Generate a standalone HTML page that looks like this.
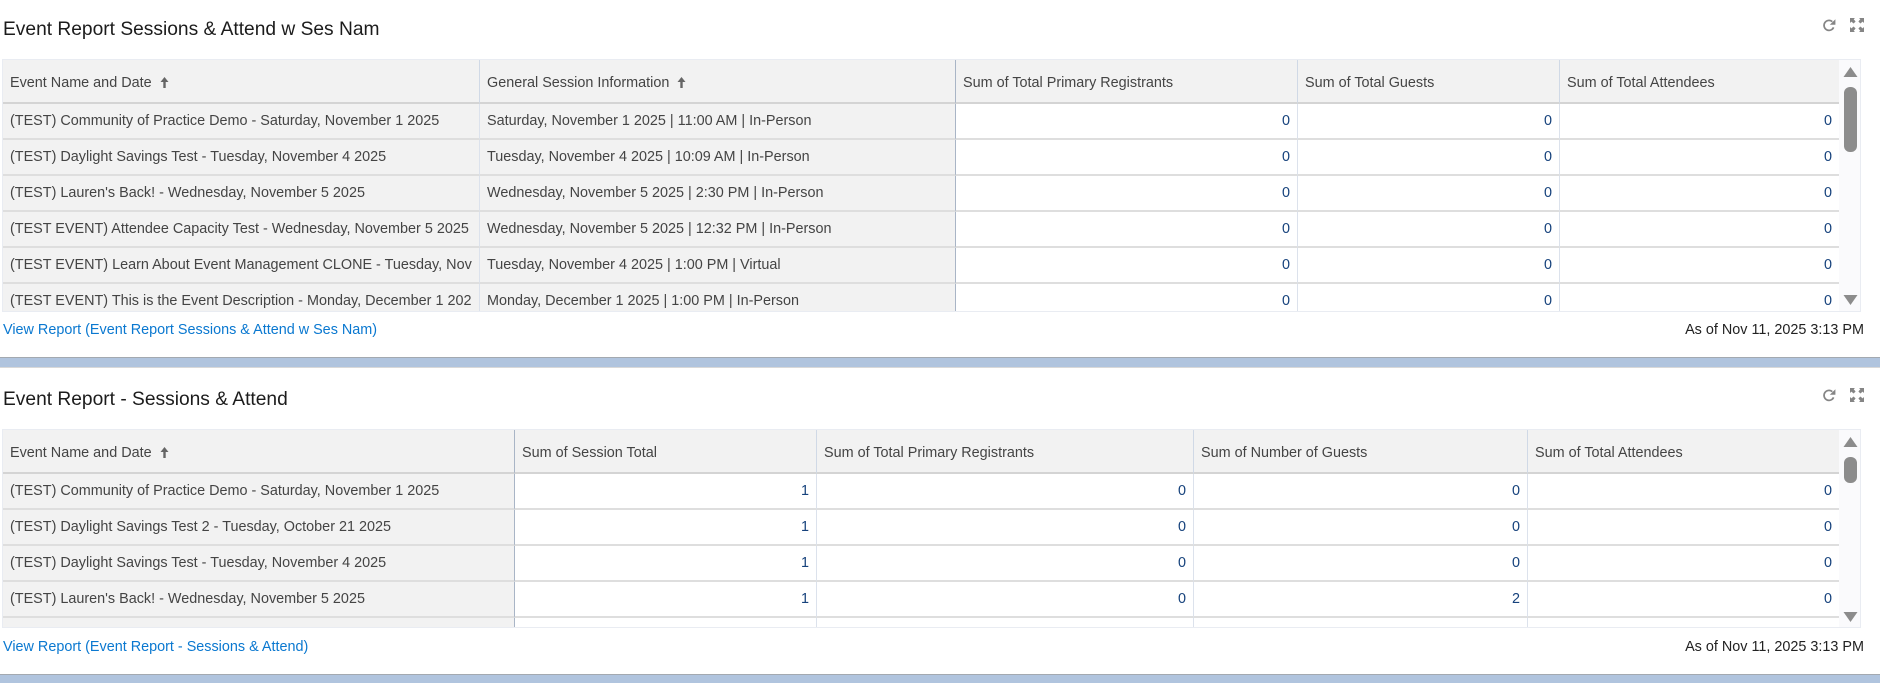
<!DOCTYPE html>
<html><head><meta charset="utf-8"><title>Dashboard</title>
<style>
html,body{margin:0;padding:0;width:1880px;height:683px;overflow:hidden;background:#fff;font-family:"Liberation Sans",Arial,sans-serif}
#root{position:absolute;left:0;top:0;width:1880px;height:683px;overflow:hidden;background:#fff;filter:blur(.35px)}
.abs{position:absolute}
.title{position:absolute;left:3px;font-size:19.2px;line-height:24px;color:#1c1c1c;white-space:nowrap}
.link{position:absolute;left:3px;font-size:14.4px;line-height:18px;color:#0a78d0;white-space:nowrap}
.asof{position:absolute;right:16px;font-size:14.4px;line-height:18px;color:#222;white-space:nowrap}
.band{position:absolute;left:0;width:1880px;background:#b0c4de}
.wrap{position:absolute;left:2px;width:1859px;background:#fff;border:1px solid #e9ecf2;box-sizing:border-box;overflow:hidden}
table{position:absolute;left:0;top:0;border-collapse:separate;border-spacing:0;table-layout:fixed;font-size:14.4px}
th,td{box-sizing:border-box;white-space:nowrap;overflow:hidden;padding:0 7px;text-align:left;font-weight:normal;color:#444}
th{height:44px;background:#f2f2f2;border-bottom:2px solid #d4d4d4;border-right:1px solid #d0d9e6;padding-top:3px}
td{height:36px;border-bottom:2px solid #dedede;border-right:1px solid #dce2ec;padding-bottom:1px}
td.g{background:#f2f2f2}
td.n{text-align:right;color:#16427c;padding-right:7px}
.dk{border-right:1px solid #a9b5c6!important}
th:last-child,td:last-child{border-right:none}
.sb{position:absolute;background:#fafafc}
svg{position:absolute;display:block}
.s{display:inline-block;width:9px;height:11px;position:relative;margin-left:8px;vertical-align:-1px}
.s svg{left:0;top:0}
.c{overflow:hidden;white-space:nowrap}
</style></head><body><div id="root">

<div class="title" style="top:18px">Event Report Sessions &amp; Attend w Ses Nam</div>

<svg style="left:1822px;top:18px" width="15" height="15" viewBox="0 0 15 15"><path d="M11.6 9.4A5 5 0 1 1 10.3 3.6" fill="none" stroke="#858585" stroke-width="1.7"/><path d="M13.4 1.2V6.8H7.8Z" fill="#858585"/></svg>
<svg style="left:1850px;top:18px" width="14" height="14" viewBox="0 0 14 14" fill="#858585"><path d="M0 0H5L3.7 1.3 5.6 3.5 3.6 5.5 1.4 3.6 0 5Z"/><path d="M14 0H9L10.3 1.3 8.4 3.5 10.4 5.5 12.6 3.6 14 5Z"/><path d="M0 14H5L3.7 12.7 5.6 10.5 3.6 8.5 1.4 10.4 0 9Z"/><path d="M14 14H9L10.3 12.7 8.4 10.5 10.4 8.5 12.6 10.4 14 9Z"/></svg>

<div class="wrap" style="top:59px;height:253px">
<table style="width:1836px">
<colgroup><col style="width:477px"><col style="width:476px"><col style="width:342px"><col style="width:262px"><col style="width:279px"></colgroup>
<tr><th>Event Name and Date<span class="s"><svg width="9" height="11" viewBox="0 0 9 11"><path d="M4.5 0 8.5 5H5.7V11H3.3V5H.5Z" fill="#666"/></svg></span></th><th class="dk">General Session Information<span class="s"><svg width="9" height="11" viewBox="0 0 9 11"><path d="M4.5 0 8.5 5H5.7V11H3.3V5H.5Z" fill="#666"/></svg></span></th><th>Sum of Total Primary Registrants</th><th>Sum of Total Guests</th><th>Sum of Total Attendees</th></tr>
<tr><td class="g">(TEST) Community of Practice Demo - Saturday, November 1 2025</td><td class="g dk">Saturday, November 1 2025 | 11:00 AM | In-Person</td><td class="n">0</td><td class="n">0</td><td class="n">0</td></tr>
<tr><td class="g">(TEST) Daylight Savings Test - Tuesday, November 4 2025</td><td class="g dk">Tuesday, November 4 2025 | 10:09 AM | In-Person</td><td class="n">0</td><td class="n">0</td><td class="n">0</td></tr>
<tr><td class="g">(TEST) Lauren's Back! - Wednesday, November 5 2025</td><td class="g dk">Wednesday, November 5 2025 | 2:30 PM | In-Person</td><td class="n">0</td><td class="n">0</td><td class="n">0</td></tr>
<tr><td class="g">(TEST EVENT) Attendee Capacity Test - Wednesday, November 5 2025</td><td class="g dk">Wednesday, November 5 2025 | 12:32 PM | In-Person</td><td class="n">0</td><td class="n">0</td><td class="n">0</td></tr>
<tr><td class="g"><div class="c">(TEST EVENT) Learn About Event Management CLONE - Tuesday, November 4 2025</div></td><td class="g dk">Tuesday, November 4 2025 | 1:00 PM | Virtual</td><td class="n">0</td><td class="n">0</td><td class="n">0</td></tr>
<tr><td class="g"><div class="c">(TEST EVENT) This is the Event Description - Monday, December 1 2025</div></td><td class="g dk">Monday, December 1 2025 | 1:00 PM | In-Person</td><td class="n">0</td><td class="n">0</td><td class="n">0</td></tr>
</table>
<div class="sb" style="left:1836px;top:0;width:22px;height:251px"></div>
<svg style="left:1840px;top:6px" width="15" height="12" viewBox="0 0 15 12"><path d="M7.5 1 14.5 11H.5Z" fill="#8c8c8c"/></svg>
<div class="abs" style="left:1841px;top:27px;width:13px;height:65px;border-radius:6px;background:#8c8c8c"></div>
<svg style="left:1840px;top:235px" width="15" height="11" viewBox="0 0 15 11"><path d="M.5 0H14.5L7.5 10Z" fill="#8c8c8c"/></svg>
</div>
<div class="link" style="top:321px">View Report (Event Report Sessions &amp; Attend w Ses Nam)</div>
<div class="asof" style="top:321px">As of Nov 11, 2025 3:13 PM</div>

<div class="band" style="top:357px;height:11px;border-top:1px solid #a3a9b0;border-bottom:1px solid #d8d8d8;box-sizing:border-box"></div>

<div class="title" style="top:388px">Event Report - Sessions &amp; Attend</div>

<svg style="left:1822px;top:388px" width="15" height="15" viewBox="0 0 15 15"><path d="M11.6 9.4A5 5 0 1 1 10.3 3.6" fill="none" stroke="#858585" stroke-width="1.7"/><path d="M13.4 1.2V6.8H7.8Z" fill="#858585"/></svg>
<svg style="left:1850px;top:388px" width="14" height="14" viewBox="0 0 14 14" fill="#858585"><path d="M0 0H5L3.7 1.3 5.6 3.5 3.6 5.5 1.4 3.6 0 5Z"/><path d="M14 0H9L10.3 1.3 8.4 3.5 10.4 5.5 12.6 3.6 14 5Z"/><path d="M0 14H5L3.7 12.7 5.6 10.5 3.6 8.5 1.4 10.4 0 9Z"/><path d="M14 14H9L10.3 12.7 8.4 10.5 10.4 8.5 12.6 10.4 14 9Z"/></svg>

<div class="wrap" style="top:429px;height:199px">
<table style="width:1836px">
<colgroup><col style="width:512px"><col style="width:302px"><col style="width:377px"><col style="width:334px"><col style="width:311px"></colgroup>
<tr><th class="dk">Event Name and Date<span class="s"><svg width="9" height="11" viewBox="0 0 9 11"><path d="M4.5 0 8.5 5H5.7V11H3.3V5H.5Z" fill="#666"/></svg></span></th><th>Sum of Session Total</th><th>Sum of Total Primary Registrants</th><th>Sum of Number of Guests</th><th>Sum of Total Attendees</th></tr>
<tr><td class="g dk">(TEST) Community of Practice Demo - Saturday, November 1 2025</td><td class="n">1</td><td class="n">0</td><td class="n">0</td><td class="n">0</td></tr>
<tr><td class="g dk">(TEST) Daylight Savings Test 2 - Tuesday, October 21 2025</td><td class="n">1</td><td class="n">0</td><td class="n">0</td><td class="n">0</td></tr>
<tr><td class="g dk">(TEST) Daylight Savings Test - Tuesday, November 4 2025</td><td class="n">1</td><td class="n">0</td><td class="n">0</td><td class="n">0</td></tr>
<tr><td class="g dk">(TEST) Lauren's Back! - Wednesday, November 5 2025</td><td class="n">1</td><td class="n">0</td><td class="n">2</td><td class="n">0</td></tr>
<tr><td class="g dk">&nbsp;</td><td class="n">&nbsp;</td><td class="n">&nbsp;</td><td class="n">&nbsp;</td><td class="n">&nbsp;</td></tr>
</table>
<div class="sb" style="left:1836px;top:0;width:22px;height:197px"></div>
<svg style="left:1840px;top:6px" width="15" height="12" viewBox="0 0 15 12"><path d="M7.5 1 14.5 11H.5Z" fill="#8c8c8c"/></svg>
<div class="abs" style="left:1841px;top:27px;width:13px;height:26px;border-radius:6px;background:#8c8c8c"></div>
<svg style="left:1840px;top:182px" width="15" height="11" viewBox="0 0 15 11"><path d="M.5 0H14.5L7.5 10Z" fill="#8c8c8c"/></svg>
</div>
<div class="link" style="top:638px">View Report (Event Report - Sessions &amp; Attend)</div>
<div class="asof" style="top:638px">As of Nov 11, 2025 3:13 PM</div>

<div class="band" style="top:674px;height:9px;border-top:1px solid #a3a9b0;box-sizing:border-box"></div>
</div></body></html>
